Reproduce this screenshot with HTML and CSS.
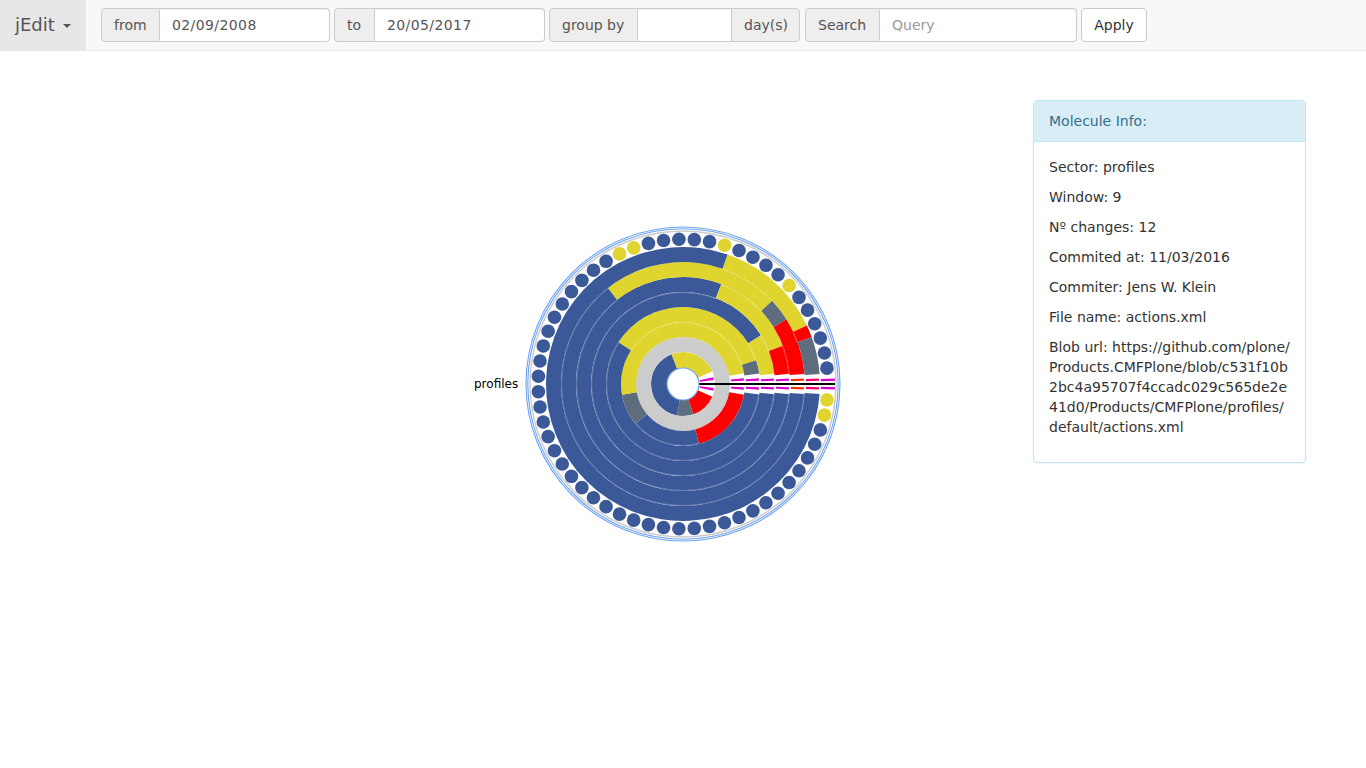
FILE: index.html
```html
<!DOCTYPE html>
<html lang="en">
<head>
    <meta charset="UTF-8">
    <meta name="viewport" content="width=device-width, initial-scale=1.0">
    <link rel="stylesheet" href="styles.css">
    <title>jEdit</title>
</head>
<body>
    <nav class="navbar">
        <a class="brand" href="#">jEdit <span class="caret"></span></a>
        <form class="filters">
            <div class="input-group">
                <span class="addon addon-from">from</span>
                <input class="field field-date" type="text" value="02/09/2008">
            </div>
            <div class="input-group">
                <span class="addon addon-to">to</span>
                <input class="field field-date" type="text" value="20/05/2017">
            </div>
            <div class="input-group">
                <span class="addon addon-group">group by</span>
                <input class="field field-group" type="text">
                <span class="addon addon-days">day(s)</span>
            </div>
            <div class="input-group group-search">
                <span class="addon addon-search">Search</span>
                <input class="field field-search" type="text" placeholder="Query">
            </div>
            <button class="btn" type="button">Apply</button>
        </form>
    </nav>

    <main class="content">
        <div class="chart">
            <svg id="molecule" width="1033" height="717" viewBox="-683 -333 1033 717"></svg>
        </div>

        <aside class="panel">
            <div class="panel-heading">Molecule Info:</div>
            <div class="panel-body">
                <p>Sector: profiles</p>
                <p>Window: 9</p>
                <p>Nº changes: 12</p>
                <p>Commited at: 11/03/2016</p>
                <p>Commiter: Jens W. Klein</p>
                <p>File name: actions.xml</p>
                <p>Blob url: https://github.com/plone/<wbr>Products.CMFPlone/blob/c531f10b<wbr>2bc4a95707f4ccadc029c565de2e<wbr>41d0/Products/CMFPlone/profiles/<wbr>default/actions.xml</p>
            </div>
        </aside>
    </main>

    <script>
        const svg = document.getElementById("molecule");
        const GAP = 9.5;

        // angles are degrees clockwise from east, "end" runs up to the gap on the right
        const rings = [
            { inner: 16, outer: 32, cells: [["red", 71], ["slate", 101], ["blue", 249], ["yellow", "end"]] },
            { inner: 32, outer: 47, full: "gray" },
            { inner: 47, outer: 62, cells: [["red", 75], ["blue", 140], ["slate", 170], ["yellow", "end"]] },
            { inner: 62, outer: 77, cells: [["blue", 213], ["yellow", 342], ["slate", "end"]] },
            { inner: 77, outer: 92, cells: [["blue", 328], ["yellow", "end"]] },
            { inner: 92, outer: 107, cells: [["blue", 291], ["yellow", 339], ["red", "end"]] },
            { inner: 107, outer: 122, cells: [["blue", 232], ["yellow", 317], ["slate", 328], ["red", "end"]] },
            { inner: 122, outer: 137, cells: [["blue", 289], ["yellow", 334.7], ["red", 340], ["slate", "end"]] }
        ];

        const traces = [
            [17, 31, "magenta"], [48, 61, "magenta"], [63, 76, "magenta"], [78, 91, "magenta"],
            [93, 106, "magenta"], [108, 121, "orange"], [123, 136, "pink"], [138, 152, "magenta"]
        ];

        const yellowDots = [0, 1, 51, 46, 40, 39];

        function add(tag, attrs, parent = svg) {
            const el = document.createElementNS("http://www.w3.org/2000/svg", tag);
            for (const key in attrs) el.setAttribute(key, attrs[key]);
            parent.appendChild(el);
            return el;
        }

        function point(r, deg) {
            const a = deg * Math.PI / 180;
            return `${(r * Math.cos(a)).toFixed(2)} ${(r * Math.sin(a)).toFixed(2)}`;
        }

        function sector(r0, r1, a0, a1) {
            const large = a1 - a0 > 180 ? 1 : 0;
            return `M${point(r1, a0)}A${r1} ${r1} 0 ${large} 1 ${point(r1, a1)}` +
                `L${point(r0, a1)}A${r0} ${r0} 0 ${large} 0 ${point(r0, a0)}Z`;
        }

        function arc(r, a0, a1) {
            const large = a1 - a0 > 180 ? 1 : 0;
            return `M${point(r, a0)}A${r} ${r} 0 ${large} 1 ${point(r, a1)}`;
        }

        // outer rims
        add("circle", { r: 153, class: "rim-gray" });
        add("circle", { r: 155.2, class: "rim-blue" });
        add("circle", { r: 157, class: "rim-blue" });

        // resolve each ring into spans and draw them
        rings.forEach(ring => {
            if (ring.full) {
                add("circle", { r: (ring.inner + ring.outer) / 2, class: `band-${ring.full}`, "stroke-width": ring.outer - ring.inner });
                ring.spans = [];
                return;
            }
            const mid = (ring.inner + ring.outer) / 2;
            const gap = Math.asin(GAP / mid) * 180 / Math.PI;
            let from = gap;
            ring.spans = ring.cells.map(([color, to]) => {
                const end = to === "end" ? 360 - gap : to;
                const span = { color, from, to: end };
                add("path", { d: sector(ring.inner, ring.outer, from, end), class: `cell-${color}` });
                from = end;
                return span;
            });
        });

        // thin light line only where two neighbouring rings share a colour
        for (let i = 1; i < rings.length; i++) {
            rings[i].spans.forEach(a => {
                rings[i - 1].spans.forEach(b => {
                    if (a.color !== b.color) return;
                    const from = Math.max(a.from, b.from);
                    const to = Math.min(a.to, b.to);
                    if (to > from) add("path", { d: arc(rings[i].inner - 0.6, from, to), class: "seam" });
                });
            });
        }

        // highlighted links of the selected sector
        traces.forEach(([r0, r1, color]) => {
            const mid = (r0 + r1) / 2;
            const near = Math.asin(3 / mid) * 180 / Math.PI;
            const far = Math.asin(5.2 / mid) * 180 / Math.PI;
            add("path", { d: sector(r0, r1, near, far), class: `cell-${color}` });
            add("path", { d: sector(r0, r1, -far, -near), class: `cell-${color}` });
        });
        add("path", { d: "M16 0H152", class: "axis" });

        // window dots
        for (let k = 0; k < 58; k++) {
            const deg = 6.3 + k * 6.095;
            const a = deg * Math.PI / 180;
            add("circle", {
                cx: (144.8 * Math.cos(a)).toFixed(2),
                cy: (144.8 * Math.sin(a)).toFixed(2),
                r: 6.8,
                class: yellowDots.includes(k) ? "cell-yellow" : "cell-blue"
            });
        }

        add("circle", { r: 16, class: "hub" });

        const label = add("text", { x: -209, y: 4, class: "sector-label" });
        label.textContent = "profiles";
    </script>
</body>
</html>
```

FILE: styles.css
```css
* {
    box-sizing: border-box;
}

body {
    margin: 0;
    font-family: "DejaVu Sans", sans-serif;
    font-size: 14px;
    line-height: 20px;
    color: #333;
    background: #fff;
}

.navbar {
    display: flex;
    height: 51px;
    background-color: #f8f8f8;
    border-bottom: 1px solid #e7e7e7;
}

.brand {
    display: flex;
    align-items: center;
    width: 86px;
    height: 50px;
    padding: 0 15px;
    font-size: 18px;
    color: #555;
    text-decoration: none;
    background-color: #e7e7e7;
}

.caret {
    width: 0;
    height: 0;
    margin-left: 8px;
    margin-top: 2px;
    border-top: 4px solid #555;
    border-left: 4px solid transparent;
    border-right: 4px solid transparent;
}

.filters {
    display: flex;
    gap: 4px;
    margin: 8px 0 0 15px;
}

.input-group {
    display: flex;
    height: 34px;
}

.group-search {
    margin-left: 1px;
}

.addon {
    display: flex;
    flex: none;
    align-items: center;
    padding: 0 12px;
    color: #555;
    white-space: nowrap;
    background-color: #eee;
    border: 1px solid #ccc;
}

.addon:first-child {
    border-radius: 4px 0 0 4px;
}

.addon:last-child {
    border-radius: 0 4px 4px 0;
}

.addon-from { width: 59px; }
.addon-to { width: 41px; }
.addon-group { width: 89px; }
.addon-days { width: 69px; }
.addon-search { width: 75px; }

.field {
    flex: none;
    height: 34px;
    padding: 6px 12px;
    font: inherit;
    color: #555;
    background: #fff;
    border: 1px solid #ccc;
    border-left: 0;
    border-radius: 0 4px 4px 0;
    box-shadow: inset 0 1px 1px rgba(0, 0, 0, 0.075);
    outline: none;
}

.field::placeholder {
    color: #999;
}

.field-date {
    width: 170px;
    letter-spacing: 0.4px;
}

.field-group {
    width: 93px;
    border-right: 0;
    border-radius: 0;
}

.field-search {
    width: 197px;
}

.btn {
    width: 66px;
    height: 34px;
    padding: 6px 0;
    font: inherit;
    color: #333;
    background: #fff;
    border: 1px solid #ccc;
    border-radius: 4px;
}

.content {
    display: flex;
}

.chart {
    width: 1033px;
    height: 717px;
}

.chart svg {
    display: block;
}

.panel {
    width: 273px;
    height: 363px;
    margin-top: 49px;
    background: #fff;
    border: 1px solid #bce8f1;
    border-radius: 4px;
    box-shadow: 0 1px 1px rgba(0, 0, 0, 0.05);
}

.panel-heading {
    padding: 10px 15px;
    color: #31708f;
    background-color: #d9edf7;
    border-bottom: 1px solid #bce8f1;
    border-radius: 3px 3px 0 0;
}

.panel-body {
    padding: 15px;
    overflow-wrap: break-word;
}

.panel-body p {
    margin: 0 0 10px;
}

/* chart */
.cell-blue { fill: #3b5998; }
.cell-yellow { fill: #dfd52e; }
.cell-slate { fill: #5d6d7e; }
.cell-red { fill: #ff0000; }
.cell-magenta { fill: #dd00cc; }
.cell-orange { fill: #ff3300; }
.cell-pink { fill: #ff0066; }

.band-gray {
    fill: none;
    stroke: #cccccc;
}

.seam {
    fill: none;
    stroke: #fff;
    stroke-opacity: 0.35;
    stroke-width: 0.7;
}

.axis {
    fill: none;
    stroke: #000;
    stroke-width: 2;
}

.rim-gray {
    fill: #fff;
    stroke: #ccc;
    stroke-width: 1.5;
}

.rim-blue {
    fill: none;
    stroke: #6ea3f0;
    stroke-width: 1.1;
}

.hub {
    fill: #fff;
    stroke: #6ea3f0;
    stroke-width: 1.2;
}

.sector-label {
    font-family: "DejaVu Sans", sans-serif;
    font-size: 12px;
    fill: #000;
}
```
